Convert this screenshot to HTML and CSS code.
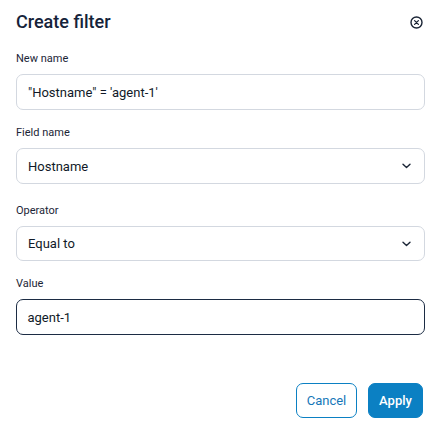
FILE: index.html
```html
<!DOCTYPE html>
<html lang="en">
<head>
<meta charset="utf-8">
<title>Create filter</title>
<link rel="stylesheet" href="styles.css">
</head>
<body>
<div class="dialog">
  <div class="header">
    <h1 class="title">Create filter</h1>
    <button class="close" aria-label="Close">
      <svg width="13" height="13" viewBox="0 0 13 13"><circle cx="6.5" cy="6.5" r="5.5" fill="none" stroke="#1b2536" stroke-width="1.4"/><path d="M4.6 4.6 L8.4 8.4 M8.4 4.6 L4.6 8.4" stroke="#1b2536" stroke-width="1.3" stroke-linecap="round"/></svg>
    </button>
  </div>
  <div class="field">
    <label class="label">New name</label>
    <div class="input">"Hostname" = 'agent-1'</div>
  </div>
  <div class="field field-wide">
    <label class="label">Field name</label>
    <div class="input select"><span>Hostname</span><svg width="9" height="6" viewBox="0 0 9 6"><path d="M1 1.2 L4.5 4.5 L8 1.2" fill="none" stroke="#1b2536" stroke-width="1.4" stroke-linecap="round" stroke-linejoin="round"/></svg></div>
  </div>
  <div class="field">
    <label class="label">Operator</label>
    <div class="input select short"><span>Equal to</span><svg width="9" height="6" viewBox="0 0 9 6"><path d="M1 1.2 L4.5 4.5 L8 1.2" fill="none" stroke="#1b2536" stroke-width="1.4" stroke-linecap="round" stroke-linejoin="round"/></svg></div>
  </div>
  <div class="field">
    <label class="label">Value</label>
    <div class="input focused">agent-1</div>
  </div>
  <div class="actions">
    <button class="btn cancel">Cancel</button>
    <button class="btn apply">Apply</button>
  </div>
</div>
</body>
</html>
```
FILE: styles.css
```css
* { box-sizing: border-box; }
html, body { margin: 0; padding: 0; background: #fff; }
body {
  font-family: Roboto, "Liberation Sans", Arial, sans-serif;
  color: #1b2536;
}
.dialog {
  width: 435px;
  padding: 10px 10px 0 16px;
}
.header {
  display: flex;
  align-items: center;
  justify-content: space-between;
  height: 24px;
  margin-bottom: 17px;
}
.title {
  margin: 0;
  font-size: 18px;
  font-weight: 500;
  line-height: 24px;
  color: #15233a;
}
.close {
  border: 0;
  background: none;
  padding: 0;
  margin-right: 2px;
  width: 13px;
  height: 13px;
  display: flex;
}
.field {
  display: flex;
  flex-direction: column;
  margin-bottom: 15px;
}
.field-wide { margin-bottom: 19px; }
.label {
  font-size: 11px;
  line-height: 16px;
  margin-bottom: 7px;
  color: #1b2536;
}
.input {
  height: 36px;
  border: 1px solid #d3d8e0;
  border-radius: 7px;
  padding: 0 11px;
  display: flex;
  align-items: center;
  font-size: 13px;
  color: #111a28;
}
.input.short { height: 35px; }
.select { justify-content: space-between; padding-right: 13px; }
.select svg { display: block; }
.focused { border: 1.5px solid #1c2c44; padding-left: 10.5px; }
.actions {
  display: flex;
  justify-content: flex-end;
  gap: 11px;
  margin-top: 48px;
  padding-right: 2px;
}
.btn {
  height: 35px;
  border-radius: 7px;
  font-family: Roboto, "Liberation Sans", Arial, sans-serif;
  font-size: 13px;
  padding: 0;
  cursor: pointer;
}
.cancel {
  width: 61px;
  background: #fff;
  border: 1px solid #0b80c3;
  color: #1577b8;
}
.apply {
  width: 55px;
  background: #0b80c3;
  border: 1px solid #0b80c3;
  color: #fff;
  font-weight: 500;
}
```
